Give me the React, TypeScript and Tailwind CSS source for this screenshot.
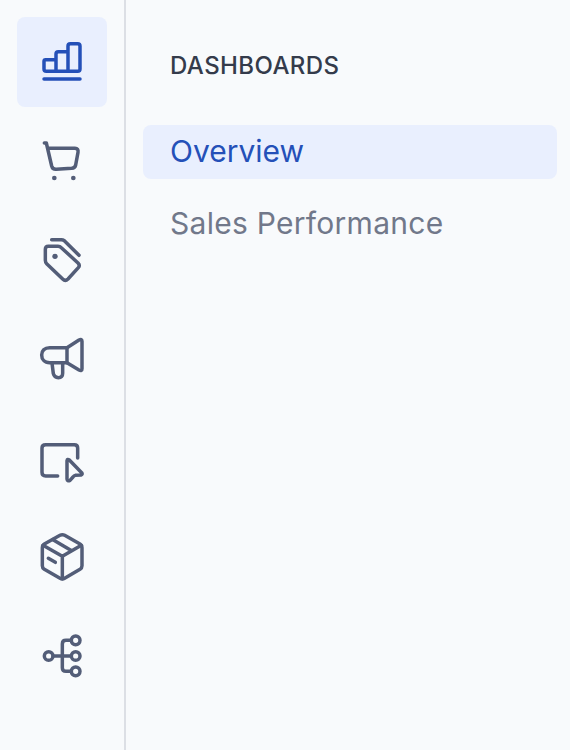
import type { ReactNode } from "react";

type NavItem = { label: string; transform: string; art: ReactNode };

const navItems: NavItem[] = [
  {
    label: "Dashboards",
    transform: "translate(-7 -7) scale(0.33333)",
    art: (
      <>
        <path d="M138 149H107Q102 149 102 154V177Q102 184 109 184H203Q210 184 210 177V108Q210 101 203 101H181Q174 101 174 108V184M174 125H145Q138 125 138 132V184" />
        <path d="M102 207H210" />
      </>
    ),
  },
  {
    label: "Orders",
    transform: "translate(13 14) scale(0.33333)",
    art: (
      <>
        <path d="M43 39H49L65 108Q68 119 79 118L125 115Q135 114 137 105L144 67Q146 55 135 55H53" />
        <circle cx="73" cy="144" r="7" fill="currentColor" stroke="none" />
        <circle cx="130" cy="144" r="7" fill="currentColor" stroke="none" />
      </>
    ),
  },
  {
    label: "Products",
    transform: "translate(13 15) scale(0.33333)",
    art: (
      <>
        <path d="M46 58Q46 49 55 49H84Q90 49 94 53L144 99Q151 106 145 113L114 147Q106 155 98 147L50 101Q46 97 46 91Z" />
        <path d="M65 29H94Q99 29 103 32L147 76" />
        <circle cx="75" cy="79" r="8" fill="currentColor" stroke="none" />
      </>
    ),
  },
  {
    label: "Marketing",
    transform: "translate(13 16) scale(0.33333)",
    art: (
      <>
        <path d="M111 53H59C43 53 35 63 35 75S43 98 59 98H111Z" />
        <path d="M111 53L147 30Q156 25 156 34V116Q156 125 147 120L111 98" />
        <path d="M66 99L70 131Q73 143 85 143Q98 143 98 130V99" />
      </>
    ),
  },
  {
    label: "Storefront",
    transform: "translate(13 19) scale(0.33333)",
    art: (
      <>
        <path d="M83 132H47Q36 132 36 121V48Q36 38 47 38H133Q143 38 143 48V78" />
        <path d="M111 86Q112 80 118 84L155 122Q159 127 153 129L136 130Q132 131 129 135L120 145Q112 149 111 141Z" />
      </>
    ),
  },
  {
    label: "Inventory",
    transform: "translate(13 14) scale(0.33333)",
    art: (
      <>
        <path d="M90 28Q97 24 104 28L150 54Q156 58 156 65V119Q156 126 150 130L104 157Q97 161 90 157L43 130Q37 126 37 119V65Q37 58 43 54Z" />
        <path d="M39 58L97 91L154 58M97 91V158M69 41L125 74M55 97L76 109" />
      </>
    ),
  },
  {
    label: "Channels",
    transform: "translate(13 15) scale(0.33333)",
    art: (
      <>
        <circle cx="56" cy="90" r="13" />
        <circle cx="137" cy="43" r="13" />
        <circle cx="137" cy="90" r="13" />
        <circle cx="137" cy="136" r="13" />
        <path d="M69 90H124M124 43H108Q97 43 97 54V125Q97 136 108 136H124" />
      </>
    ),
  },
];

export default function App() {
  return (
    <div className="flex h-screen w-full overflow-hidden bg-[#f8fafc] font-['Inter','Liberation_Sans',sans-serif]">
      <nav className="flex w-[126px] shrink-0 flex-col gap-[9px] border-r-2 border-[#dcdfe5] pt-[17px] pl-[17px]">
        {navItems.map((item, i) => (
          <button
            key={item.label}
            aria-label={item.label}
            className={
              i === 0
                ? "size-[90px] shrink-0 rounded-lg bg-[#e9effe] text-[#2450b8]"
                : "size-[90px] shrink-0 rounded-lg text-[#535d78]"
            }
          >
            <svg
              viewBox="0 0 90 90"
              className="size-[90px]"
              fill="none"
              stroke="currentColor"
              strokeWidth={10.5}
              strokeLinecap="round"
              strokeLinejoin="round"
            >
              <g transform={item.transform}>{item.art}</g>
            </svg>
          </button>
        ))}
      </nav>
      <main className="flex-1 pt-[50px] pr-[13px] pl-[17px]">
        <h2 className="pl-[27px] text-2xl leading-8 font-medium tracking-[0.4px] text-[#343b4b]">
          DASHBOARDS
        </h2>
        <ul className="mt-[43px] flex flex-col gap-[19px] text-[30px]">
          <li className="h-[54px] rounded-lg bg-[#e9effe] pl-[27px] leading-[52px] text-[#2450b8]">
            Overview
          </li>
          <li className="h-[54px] pl-[27px] leading-[51px] tracking-[0.27px] text-[#71788a]">
            Sales Performance
          </li>
        </ul>
      </main>
    </div>
  );
}
